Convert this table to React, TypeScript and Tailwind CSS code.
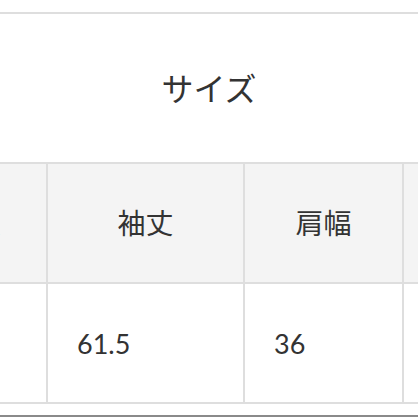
const headers = ['着丈', '袖丈', '肩幅', ''];
const values = ['', '61.5', '36', ''];

export default function App() {
  return (
    <div
      className="w-[418px] h-[418px] overflow-hidden bg-white text-[#333]"
      style={{ fontFamily: 'Lato, "Noto Sans CJK JP", sans-serif' }}
    >
      <div className="h-[12px]" />
      <div className="h-[150px] border-t-2 border-[#dedede] flex items-center justify-center">
        <span
          className="text-[32px] leading-none mb-[3px]"
          style={{ fontFamily: '"Noto Sans CJK JP", sans-serif' }}
        >
          サイズ
        </span>
      </div>
      <div className="ml-[-96px] w-[660px] border-t-2 border-[#dedede]">
        <div className="grid grid-cols-[144px_197px_159px_160px] h-[120px] bg-[#f4f4f4] border-b-2 border-[#dedede]">
          {headers.map((h, i) => (
            <div
              key={i}
              className="border-r-2 border-[#dedede] flex items-center justify-center text-[28px] pb-[2px]"
              style={{ fontFamily: '"Noto Sans CJK JP", sans-serif' }}
            >
              {i === 0 ? <span className="mr-[4px]">{h}</span> : h}
            </div>
          ))}
        </div>
        <div className="grid grid-cols-[144px_197px_159px_160px] h-[120px] bg-white border-b-2 border-[#dedede]">
          {values.map((v, i) => (
            <div key={i} className="border-r-2 border-[#dedede] flex items-center pl-[29px] pt-[3px] text-[27px]">
              {v}
            </div>
          ))}
        </div>
      </div>
      <div className="h-[11px]" />
      <div className="h-[2px] bg-[#8a8a8a]" />
    </div>
  );
}
